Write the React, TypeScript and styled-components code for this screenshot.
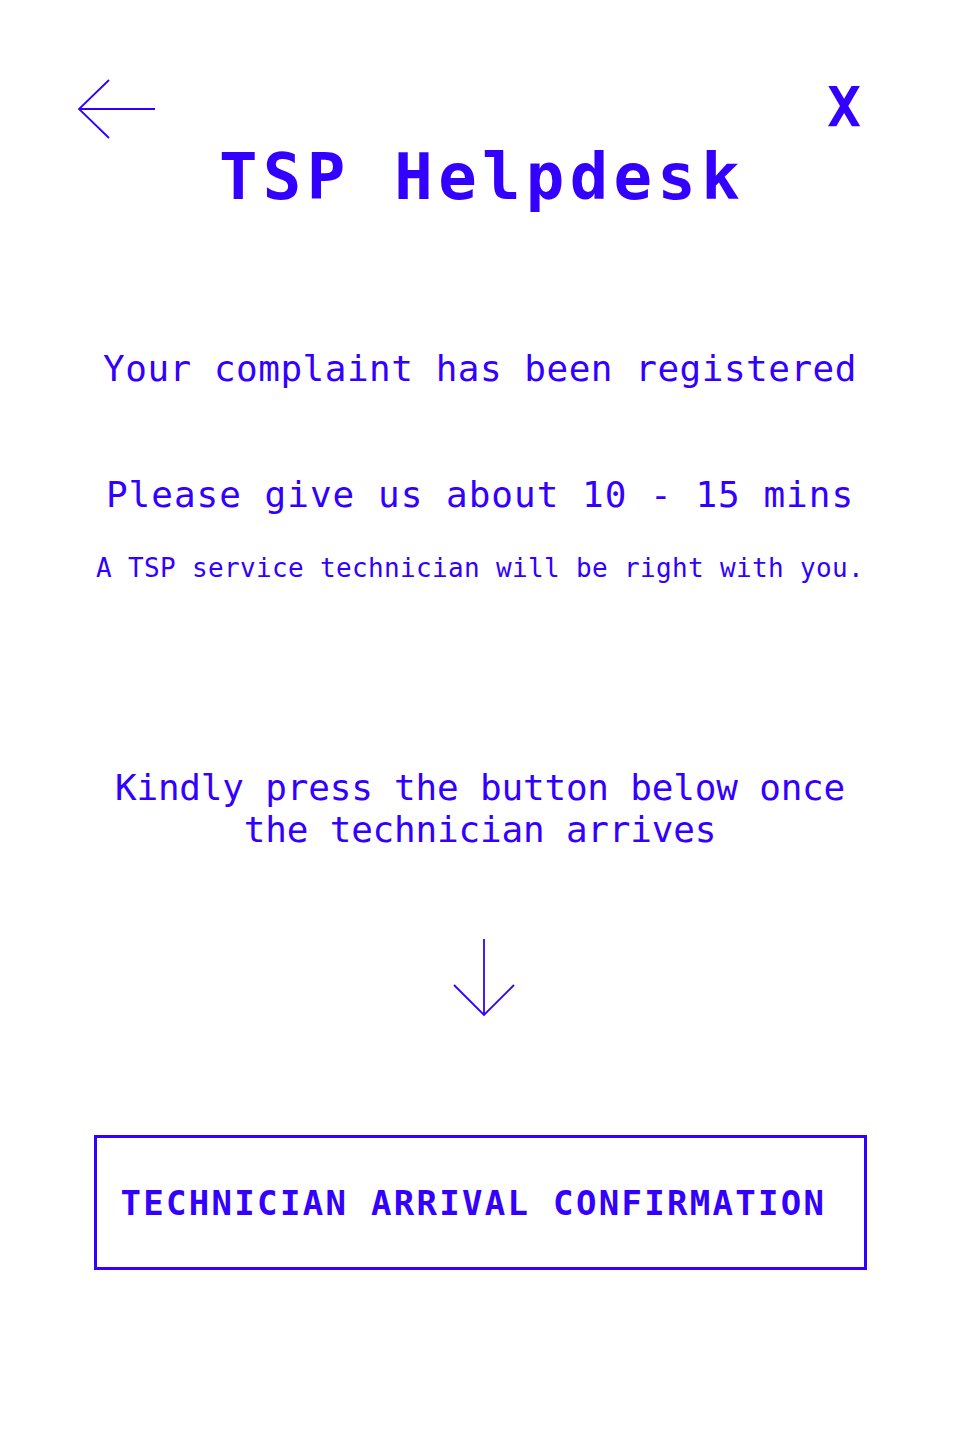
import React from "react";
import styled, { createGlobalStyle } from "styled-components";

const BLUE = "#3300ff";

const GlobalStyle = createGlobalStyle`
  html, body {
    margin: 0;
    padding: 0;
    background: #ffffff;
  }
  body {
    font-family: "DejaVu Sans Mono", "Liberation Mono", monospace;
    color: ${BLUE};
  }
`;

const Page = styled.div`
  width: 960px;
  min-height: 1440px;
  box-sizing: border-box;
  padding: 79px 0 0;
  display: flex;
  flex-direction: column;
  align-items: center;
`;

const Header = styled.header`
  width: 100%;
  box-sizing: border-box;
  padding: 0 99px 0 77px;
  height: 60px;
  display: flex;
  justify-content: space-between;
  align-items: flex-start;
`;

const IconButton = styled.button`
  border: 0;
  background: none;
  padding: 0;
  margin: 0;
  cursor: pointer;
  color: ${BLUE};
  display: block;
`;

const Close = styled(IconButton)`
  font-family: "DejaVu Sans Mono", monospace;
  font-weight: 700;
  font-size: 56px;
  line-height: 56px;
`;

const Title = styled.h1`
  margin: 6px 0 0 4px;
  font-size: 64px;
  line-height: 64px;
  font-weight: 700;
  letter-spacing: 5.3px;
  text-align: center;
`;

const Line = styled.p<{ $size: number; $spacing: number; $top: number; $lh?: number }>`
  margin: ${(p) => p.$top}px 0 0;
  font-size: ${(p) => p.$size}px;
  line-height: ${(p) => p.$lh ?? p.$size}px;
  letter-spacing: ${(p) => p.$spacing}px;
  text-align: center;
  white-space: pre-line;
`;

const DownArrow = styled.svg`
  margin: 88px 0 0 8px;
  display: block;
`;

const ConfirmButton = styled.button`
  margin-top: 118px;
  width: 773px;
  height: 135px;
  box-sizing: border-box;
  border: 3px solid ${BLUE};
  background: #ffffff;
  padding: 0 0 0 24px;
  display: flex;
  align-items: center;
  font-family: "DejaVu Sans Mono", monospace;
  font-weight: 700;
  font-size: 34px;
  letter-spacing: 2.3px;
  color: ${BLUE};
  cursor: pointer;
`;

const App = () => {
  return (
    <Page>
      <GlobalStyle />
      <Header>
        <IconButton aria-label="Back">
          <svg width="80" height="60" viewBox="0 0 80 60" fill="none">
            <path d="M2 30 H78 M32 1 L2 30 L32 59" stroke={BLUE} strokeWidth="1.8" />
          </svg>
        </IconButton>
        <Close aria-label="Close">X</Close>
      </Header>
      <Title>TSP Helpdesk</Title>
      <Line $size={36} $spacing={0.5} $top={142}>
        Your complaint has been registered
      </Line>
      <Line $size={36} $spacing={1} $top={90}>
        Please give us about 10 - 15 mins
      </Line>
      <Line $size={26} $spacing={0.35} $top={42}>
        A TSP service technician will be right with you.
      </Line>
      <Line $size={36} $spacing={-0.2} $top={186} $lh={42}>
        {"Kindly press the button below once\nthe technician arrives"}
      </Line>
      <DownArrow width="62" height="78" viewBox="0 0 62 78" fill="none">
        <path d="M31 0 V76 M1 46 L31 76 L61 46" stroke={BLUE} strokeWidth="1.8" />
      </DownArrow>
      <ConfirmButton>TECHNICIAN ARRIVAL CONFIRMATION</ConfirmButton>
    </Page>
  );
};

export default App;
